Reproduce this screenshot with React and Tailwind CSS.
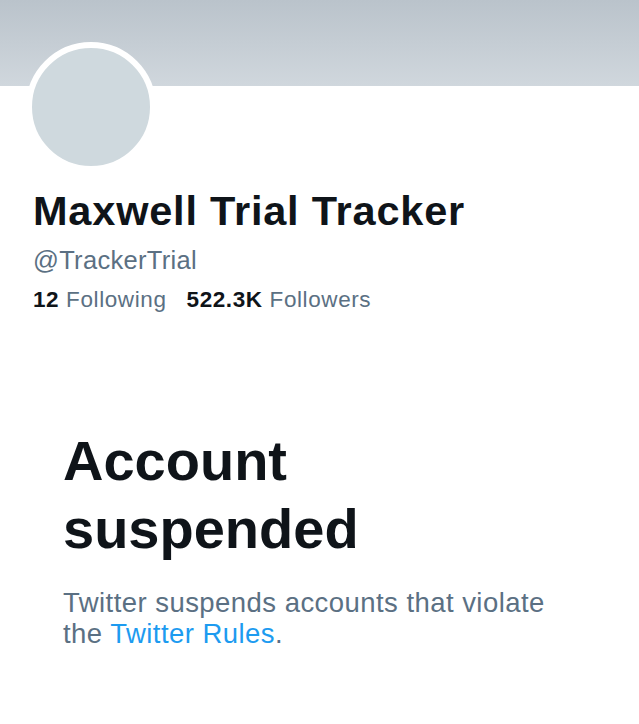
import React from "react";

export default function App() {
  return (
    <div className="min-h-[724px] w-full bg-white font-['Liberation_Sans',Arial,sans-serif]">
      {/* Banner */}
      <div className="h-[86px] w-full bg-gradient-to-b from-[#bac3cb] to-[#d0d7dd]" />

      {/* Profile header */}
      <div className="px-[26px]">
        <div className="-mt-[44px] h-[130px] w-[130px] rounded-full border-[6px] border-white bg-[#cfd9de]" />
      </div>

      <div className="pl-[33px]">
        <h1 className="mt-[15px] text-[41.5px] font-bold leading-[48px] tracking-[0.8px] text-[#0f1419]">
          Maxwell Trial Tracker
        </h1>
        <p className="mt-[10px] text-[25.5px] leading-[30px] tracking-[0.3px] text-[#5b7083]">
          @TrackerTrial
        </p>
        <div className="mt-[11px] flex gap-[20px] text-[22.5px] leading-[28px] tracking-[0.6px] text-[#5b7083]">
          <span>
            <span className="font-bold text-[#0f1419]">12</span> Following
          </span>
          <span>
            <span className="font-bold text-[#0f1419]">522.3K</span> Followers
          </span>
        </div>
      </div>

      {/* Suspended notice */}
      <div className="pl-[63px]">
        <h2 className="mt-[113px] text-[56px] font-bold leading-[68px] text-[#0f1419]">
          Account
          <br />
          suspended
        </h2>
        <p className="mt-[24px] text-[27.5px] leading-[31px] tracking-[0.45px] text-[#5b7083]">
          Twitter suspends accounts that violate
          <br />
          the <span className="text-[#1d9bf0]">Twitter Rules</span>.
        </p>
      </div>
    </div>
  );
}
